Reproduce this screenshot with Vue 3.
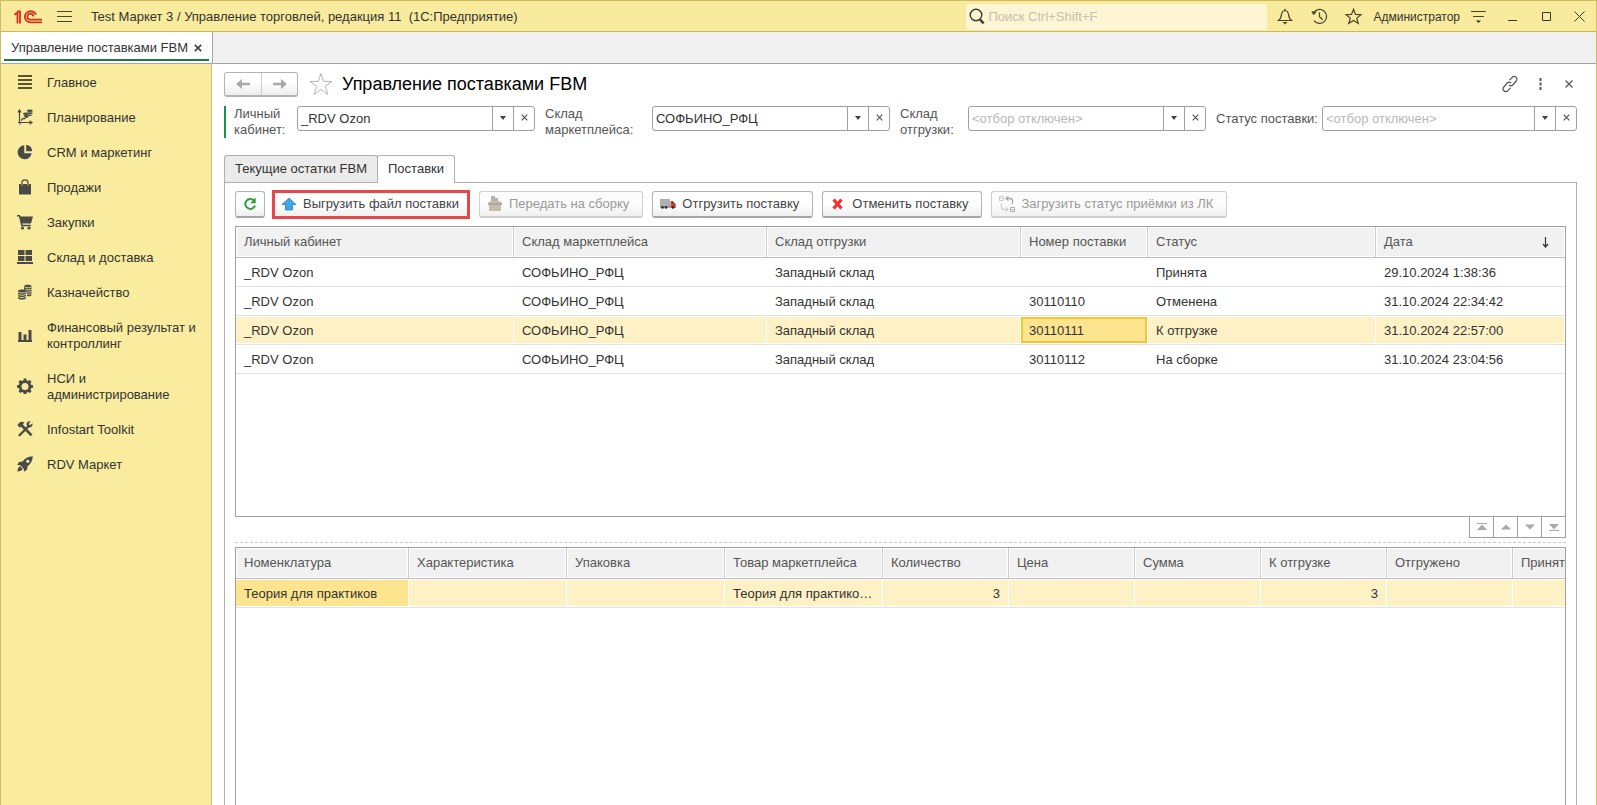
<script setup>
import { ref } from 'vue'

const sections = [
  { icon: 'lines', label: 'Главное' },
  { icon: 'plan', label: 'Планирование' },
  { icon: 'pie', label: 'CRM и маркетинг' },
  { icon: 'bag', label: 'Продажи' },
  { icon: 'cart', label: 'Закупки' },
  { icon: 'stock', label: 'Склад и доставка' },
  { icon: 'coins', label: 'Казначейство' },
  { icon: 'chart', label: 'Финансовый результат и контроллинг' },
  { icon: 'gear', label: 'НСИ и администрирование' },
  { icon: 'tools', label: 'Infostart Toolkit' },
  { icon: 'rocket', label: 'RDV Маркет' },
]

const filters = ref([
  { id: 'account', label: 'Личный кабинет:', value: '_RDV Ozon', marked: true },
  { id: 'market', label: 'Склад маркетплейса:', value: 'СОФЬИНО_РФЦ' },
  { id: 'shipping', label: 'Склад отгрузки:', value: '' },
  { id: 'status', label: 'Статус поставки:', value: '' },
])

const supplyColumns = ['Личный кабинет', 'Склад маркетплейса', 'Склад отгрузки', 'Номер поставки', 'Статус', 'Дата']
const supplies = [
  ['_RDV Ozon', 'СОФЬИНО_РФЦ', 'Западный склад', '', 'Принята', '29.10.2024 1:38:36'],
  ['_RDV Ozon', 'СОФЬИНО_РФЦ', 'Западный склад', '30110110', 'Отменена', '31.10.2024 22:34:42'],
  ['_RDV Ozon', 'СОФЬИНО_РФЦ', 'Западный склад', '30110111', 'К отгрузке', '31.10.2024 22:57:00'],
  ['_RDV Ozon', 'СОФЬИНО_РФЦ', 'Западный склад', '30110112', 'На сборке', '31.10.2024 23:04:56'],
]
const activeRow = 2
const activeCol = 3

const goodsColumns = ['Номенклатура', 'Характеристика', 'Упаковка', 'Товар маркетплейса', 'Количество', 'Цена', 'Сумма', 'К отгрузке', 'Отгружено', 'Принято']
const goods = ['Теория для практиков', '', '', 'Теория для практико…', '3', '', '', '3', '', '']
</script>

<template>
  <div class="window">
    <header class="titlebar">
      <svg class="logo" viewBox="0 0 30 14" aria-label="1С">
        <g fill="none" stroke="#d6301f" stroke-width="1.9">
          <path d="M.4 4.600 3.600 2.600V13.600M3 1.300h3.200V13.600" />
          <path d="M22.800 4.600A6 5.700 0 1 0 17 12.500H29" />
          <path d="M20 6.300A3.100 3.100 0 1 0 17 9.700H29" />
        </g>
      </svg>
      <button class="bare burger" aria-label="Меню"><svg width="15" height="13" viewBox="0 0 15 13"><path d="M0 1.500h15M0 6.500h15M0 11.500h15" stroke="#4b4532" fill="none" /></svg></button>
      <span class="app-name">Test Маркет 3 / Управление торговлей, редакция 11&nbsp; (1С:Предприятие)</span>
      <label class="search">
        <svg width="16" height="17" viewBox="0 0 16 17" fill="none" stroke="#3f3b2d"><circle cx="7" cy="7" r="5.800" stroke-width="1.400" /><path d="m11 11.500 3.600 3.800" stroke-width="2.400" /></svg>
        <input type="search" placeholder="Поиск Ctrl+Shift+F" aria-label="Поиск">
      </label>
      <button class="bare tool" aria-label="Уведомления"><svg width="16" height="17" viewBox="0 0 16 17" fill="none" stroke="#47422f" stroke-width="1.200"><path d="M1.500 12.500h13c-2.500-1.600-2.700-3.600-3-6C11.200 4 10 2.700 8 2.500 6 2.700 4.800 4 4.500 6.500c-.3 2.400-.5 4.400-3 6zM8 .8v1.700" /><path d="M5.500 14h5L8 16.500z" fill="#47422f" stroke="none" /></svg></button>
      <button class="bare tool" aria-label="История"><svg width="17" height="17" viewBox="0 0 17 17" fill="none" stroke="#47422f" stroke-width="1.200"><path d="M2.500 5A7 7 0 1 1 3 12.700M8.500 4.300v4.500l3.200 3" /><path d="M.3 3.200 5.800 3.700 2.500 7.300z" fill="#47422f" stroke="none" /></svg></button>
      <button class="bare tool" aria-label="Избранное"><svg width="17" height="17" viewBox="0 0 17 17" fill="none" stroke="#47422f" stroke-width="1.200"><path d="m8.500 1.300 2 5.100 5.500.3-4.300 3.400 1.500 5.300-4.700-3-4.700 3 1.500-5.300L1 6.700l5.500-.3z" /></svg></button>
      <a class="user" href="#">Администратор</a>
      <button class="bare panel" aria-label="Настройки"><svg width="15" height="14" viewBox="0 0 15 14"><path d="M0 1.500h15M2 6.500h11" stroke="#47422f" /><path d="M5 10.500h5L7.500 13z" fill="#332f22" /></svg></button>
      <button class="bare sys" aria-label="Свернуть"><svg width="11" height="11" viewBox="0 0 11 11"><path d="M1 9.500h9" stroke="#3a3628" /></svg></button>
      <button class="bare sys" aria-label="Развернуть"><svg width="11" height="11" viewBox="0 0 11 11"><path d="M1.500 1.500h8v8h-8z" stroke="#3a3628" fill="none" /></svg></button>
      <button class="bare sys" aria-label="Закрыть"><svg width="11" height="11" viewBox="0 0 11 11"><path d="m.5.5 10 10M10.500.5l-10 10" stroke="#3a3628" /></svg></button>
    </header>

    <nav class="doc-tabs">
      <div class="doc-tab">
        <a href="#">Управление поставками FBM</a>
        <button class="bare" aria-label="Закрыть вкладку"><svg width="8" height="8" viewBox="0 0 8 8"><path d="m.8.8 6.400 6.400M7.200.8.8 7.200" stroke="#444" stroke-width="1.700" /></svg></button>
      </div>
    </nav>

    <div class="body">
      <aside class="sidebar">
        <a v-for="s in sections" :key="s.label" href="#" class="section">
          <svg class="section-icon" width="16" height="16" viewBox="0 0 16 16" fill="#4b4a46">
            <path v-if="s.icon === 'lines'" d="M1 1h14v2H1zM1 5h14v2H1zM1 9h14v2H1zM1 13h14v2H1z" fill="#5b5230" />
            <template v-else-if="s.icon === 'plan'">
              <path d="M2.500 2v11.500H14M.8 3.500 2.500 1l1.700 2.500M12.500 11.800l2.500 1.700-2.500 1.700M1 13.500h2v2" fill="none" stroke="#4b4a46" stroke-width="1.200" />
              <path d="m4 11.500 2-2 1.500.3L9 8l2 .3" fill="none" stroke="#4b4a46" stroke-width="1.200" />
              <ellipse cx="12.800" cy="1.800" rx="3" ry="1.300" /><ellipse cx="12.800" cy="4.200" rx="3" ry="1" /><ellipse cx="8.800" cy="4.800" rx="2.800" ry="1.200" /><ellipse cx="9.300" cy="7" rx="2.800" ry="1" /><ellipse cx="12.500" cy="6.300" rx="2.500" ry=".8" />
            </template>
            <path v-else-if="s.icon === 'pie'" d="M7.300 1.300a7 7 0 1 0 7.300 7.900H7.300zM9.200.7v6.500h6A7 7 0 0 0 9.200.7z" />
            <template v-else-if="s.icon === 'bag'"><path d="M2 5h2.300v2h1.500V5h4.400v2h1.500V5H14v10.500H2z" /><path d="M5 7V3.500C5 1.500 6.200.8 8 .8s3 .7 3 2.700V7" fill="none" stroke="#4b4a46" stroke-width="1.200" /></template>
            <template v-else-if="s.icon === 'cart'"><path d="M0 1h3l.5 1.500H16L14 9.500H5.200l.3 1.300h8.300V12.300H4.200L2 2.500H0z" /><circle cx="5.500" cy="14" r="1.600" /><circle cx="12" cy="14" r="1.600" /></template>
            <path v-else-if="s.icon === 'stock'" d="M1 1h6.500v5H1zM8.500 1H15v5H8.500zM1 7h6.500v5H1zM8.500 7H15v5H8.500zM0 13h16v2H0z" />
            <template v-else-if="s.icon === 'coins'">
              <path d="M7 2.200c0-2 7.500-2 7.500 0v8.500c0 1.500-3 1.800-4.500 1.300V9.500L7 5.500z" /><path d="M1 7c0-2 8-2 8 0v7c0 2-8 2-8 0z" />
              <path d="M7.500 3c2 1 5 1 7 0M8.500 5.300c2 .7 4 .7 6 0M9.500 7.700c2 .5 3 .5 5 0M10 10c2 .3 3 .2 4.500-.3M1 8c2 1.300 6 1.300 8 0M1 10.300c2 1.300 6 1.300 8 0M1 12.600c2 1.300 6 1.300 8 0" fill="none" stroke="#f9ec9e" stroke-width=".8" />
            </template>
            <path v-else-if="s.icon === 'chart'" d="M1.500 5h3v8h-3zM6.500 7.500h3V13h-3zM11.500 3h3v10h-3zM1 13h14v2H1z" />
            <path v-else-if="s.icon === 'gear'" fill-rule="evenodd" d="M6.700.5h2.600l.4 1.900 1.300.6 1.700-1 1.800 1.800-1 1.700.5 1.300 2 .4v2.600l-2 .4-.5 1.300 1 1.700-1.800 1.800-1.700-1-1.300.5-.4 2H6.700l-.4-2-1.300-.5-1.700 1-1.800-1.800 1-1.700-.5-1.300-2-.4V7.200l2-.4.5-1.300-1-1.700 1.800-1.800 1.700 1 1.300-.6zM8 5a3.500 3.500 0 1 0 0 7 3.500 3.500 0 0 0 0-7z" />
            <template v-else-if="s.icon === 'tools'">
              <path d="m2.500 14.200 9-9" fill="none" stroke="#4b4a46" stroke-width="2.300" stroke-linecap="round" />
              <path d="M15.500 2.300 13 4.200l-1.300-1.300L13.500.4C10.500 0 9 2 9.700 4.300l2 2C14 7 16 5.300 15.500 2.300z" />
              <path d="M.3 4.300 2.500 1.500C4 .3 6 .5 7.500 1.700L5.700 3.200l9.800 10.300-1.800 1.800L4 5.700l-1.500.8-.7-.9z" />
            </template>
            <template v-else>
              <path d="M15.800.2C11 .4 7.800 2.500 5.500 5.500L2 6 .2 9l3 .3 3.500 3.500.3 3 3-2 .6-3.500C13.500 8 15.600 5 15.800.2zM3 10.200C1.300 11 .6 13 .4 15.600 3 15.400 5 14.700 5.800 13z" /><circle cx="10.800" cy="5.200" r="1.500" fill="#fffbe6" />
            </template>
          </svg>
          <span>{{ s.label }}</span>
        </a>
      </aside>

      <main class="content">
        <div class="heading">
          <div class="history">
            <button aria-label="Назад"><svg width="14" height="12" viewBox="0 0 14 12"><path d="M0 6 6 1v3.700h8v2.600H6V11z" fill="#a9a9a9" /></svg></button>
            <button aria-label="Вперед"><svg width="14" height="12" viewBox="0 0 14 12"><path d="M14 6 8 1v3.700H0v2.600h8V11z" fill="#a9a9a9" /></svg></button>
          </div>
          <button class="bare fav" aria-label="В избранное"><svg width="24" height="24" viewBox="0 0 24 24"><path d="m12 1.500 2.700 7.900H23l-6.700 4.900 2.600 8.200-6.900-5-6.900 5 2.600-8.200L1 9.400h8.300z" fill="none" stroke="#b5b5b5" /></svg></button>
          <h1>Управление поставками FBM</h1>
          <button class="bare act" aria-label="Ссылка"><svg width="18" height="18" viewBox="0 0 18 18" fill="none" stroke="#555" stroke-width="1.200"><path d="m8.500 5.200 2.700-2.900c2.500-2.400 6.300.9 4 3.700l-3.400 4C10.500 11.300 9 11 8 10" /><path d="m9.500 12.800-2.700 2.900c-2.500 2.400-6.300-.9-4-3.700l3.400-4C7.500 6.700 9 7 10 8" /></svg></button>
          <button class="bare act" aria-label="Ещё"><svg width="3" height="12" viewBox="0 0 3 12" fill="#555"><path d="M.5 0h2v3h-2zM.5 4.500h2v3h-2zM.5 9h2v3h-2z" /></svg></button>
          <button class="bare act" aria-label="Закрыть форму"><svg width="8" height="8" viewBox="0 0 8 8"><path d="m.5.5 7 7M7.500.5l-7 7" stroke="#555" stroke-width="1.200" /></svg></button>
        </div>

        <div class="filters">
          <div v-for="f in filters" :key="f.id" class="filter" :class="[f.id, { marked: f.marked }]">
            <label :for="f.id">{{ f.label }}</label>
            <div class="combo">
              <input :id="f.id" v-model="f.value" type="text" placeholder="<отбор отключен>">
              <button aria-label="Выбрать"><svg width="6" height="4" viewBox="0 0 6 4"><path d="M0 0h6L3 4z" fill="#444" /></svg></button>
              <button aria-label="Очистить"><svg width="7" height="7" viewBox="0 0 7 7"><path d="m.7.7 5.600 5.600M6.300.7.7 6.300" stroke="#555" stroke-width="1.200" /></svg></button>
            </div>
          </div>
        </div>

        <div class="form-tabs">
          <button class="form-tab">Текущие остатки FBM</button>
          <button class="form-tab current">Поставки</button>
        </div>

        <section class="pane">
          <div class="commands">
            <button class="cmd refresh" aria-label="Обновить"><svg width="14" height="14" viewBox="0 0 14 14"><path d="M11 3.500A5 5 0 1 0 12 8.700" fill="none" stroke="#2f9e3a" stroke-width="2" /><path d="M12.700.5v5.800H7.200z" fill="#2f9e3a" /></svg></button>
            <div class="highlight">
              <button class="cmd"><svg width="16" height="16" viewBox="0 0 16 16"><path d="m8 2 7 6.500h-3.500V14h-7V8.500H1z" fill="#41a5e6" stroke="#2a80bd" stroke-width=".8" /></svg>Выгрузить файл поставки</button>
            </div>
            <button class="cmd" disabled><svg width="16" height="16" viewBox="0 0 16 16"><path d="M4 0h4v2h3v4H4z" fill="#b5b5ad" /><path d="m1 7 2.500-2h9L15 7v2h-1v6H2V9H1z" fill="#c3bfac" /><path d="M1 7h14v2H1z" fill="#aca996" /></svg>Передать на сборку</button>
            <button class="cmd"><svg width="16" height="16" viewBox="0 0 16 16"><path d="M0 3h10v8H0z" fill="#b0b0b0" /><path d="M10.500 5h2.500l2.700 3.200V11.500h-5.200z" fill="#d93a2b" /><path d="M12 6h1l1.500 1.900H12z" fill="#77423c" /><path d="M0 10.500h16v1H0z" fill="#666" /><circle cx="2.500" cy="11.500" r="1.300" fill="#222" /><circle cx="6" cy="11.500" r="1.300" fill="#222" /><circle cx="13" cy="11.500" r="1.300" fill="#222" /></svg>Отгрузить поставку</button>
            <button class="cmd"><svg width="16" height="16" viewBox="0 0 16 16"><path d="m3.500 3.500 8 9M11.500 3.500l-8 9" stroke="#f5302f" stroke-width="3.200" /></svg>Отменить поставку</button>
            <button class="cmd" disabled><svg width="16" height="16" viewBox="0 0 16 16" fill="none" stroke="#a5a9ad"><path d="M.5.500h4v4h-4zM1.500 2.500h2" stroke="#c8cacc" /><path d="M11.500 11.500h4v4h-4zM12.500 13.500h2" /><path d="M7 2.500h4c1.500 0 2.500 1 2.500 2.500v3M9.500.5l-2.500 2 2.500 2" stroke-width="1.300" /><path d="M2.500 7v4c0 1.500 1 2.500 2.500 2.500h4M7 11.500l2 2-2 2" stroke="#cfd1d3" stroke-width="1.300" /></svg>Загрузить статус приёмки из ЛК</button>
          </div>

          <div class="grid-box supplies">
            <table>
              <colgroup><col v-for="(c, i) in supplyColumns" :key="c" :class="'s' + i"></colgroup>
              <thead>
                <tr><th v-for="(c, i) in supplyColumns" :key="c"><div :class="{ sorted: i === 5 }">{{ c }}<svg v-if="i === 5" width="7" height="11" viewBox="0 0 7 11"><path d="M3.500 0v10M1 7l2.500 3L6 7" fill="none" stroke="#333" stroke-width="1.200" /></svg></div></th></tr>
              </thead>
              <tbody>
                <tr v-for="(row, r) in supplies" :key="r" :class="{ selected: r === activeRow }">
                  <td v-for="(v, c) in row" :key="c"><div :class="{ focused: r === activeRow && c === activeCol }">{{ v }}</div></td>
                </tr>
              </tbody>
            </table>
          </div>

          <div class="pager">
            <button aria-label="В начало"><svg width="12" height="8" viewBox="0 0 12 8"><path d="M1 0h10v1H1zM6 1.500 11 7H1z" fill="#a9a9a9" /></svg></button>
            <button aria-label="Вверх"><svg width="12" height="8" viewBox="0 0 12 8"><path d="m6 1.500 5 5H1z" fill="#a9a9a9" /></svg></button>
            <button aria-label="Вниз"><svg width="12" height="8" viewBox="0 0 12 8"><path d="m6 6.500 5-5H1z" fill="#a9a9a9" /></svg></button>
            <button aria-label="В конец"><svg width="12" height="8" viewBox="0 0 12 8"><path d="M1 7h10v1H1zM6 6.500 11 1H1z" fill="#a9a9a9" /></svg></button>
          </div>
          <div class="splitter"></div>

          <div class="grid-box goods">
            <table>
              <colgroup><col v-for="(c, i) in goodsColumns" :key="c" :class="'g' + i"></colgroup>
              <thead><tr><th v-for="c in goodsColumns" :key="c"><div>{{ c }}</div></th></tr></thead>
              <tbody>
                <tr class="selected"><td v-for="(v, c) in goods" :key="c" :class="{ num: c > 3 }"><div :class="{ current: c === 0 }">{{ v }}</div></td></tr>
              </tbody>
            </table>
          </div>
        </section>
      </main>
    </div>
  </div>
</template>

<style>
body { margin: 0; }
</style>

<style scoped>
.window {
  display: flex;
  flex-direction: column;
  height: 100vh;
  min-height: 640px;
  box-sizing: border-box;
  overflow: hidden;
  border: 1px solid #cdbd60;
  border-bottom: 0;
  background: #fff;
  color: #333;
  font: 13px/16px "Liberation Sans", Arial, sans-serif;
}
.window *, .window *::before { box-sizing: border-box; }
button, input { font: inherit; color: inherit; margin: 0; }
button { display: flex; align-items: center; justify-content: center; padding: 0; }
a { color: inherit; text-decoration: none; }
svg { flex: none; display: block; }
.bare { border: 0; background: none; }

.titlebar {
  display: flex;
  align-items: center;
  flex: none;
  height: 31px;
  padding: 1px 1px 0 13px;
  background: #f9eb9d;
  border-bottom: 1px solid #c9b964;
}
.logo { width: 29px; height: 14px; }
.burger { margin-left: 14px; }
.app-name { margin-left: 19px; white-space: nowrap; }
.search {
  display: flex;
  align-items: center;
  width: 301px;
  height: 26px;
  margin-left: auto;
  padding-left: 3px;
  background: #fdf5d3;
  border-radius: 3px;
}
.search input { flex: 1; min-width: 0; padding: 0 3px; border: 0; background: none; outline: 0; }
.search input::placeholder { color: #c6c1ac; opacity: 1; }
.tool { width: 34px; }
.search + .tool { margin-left: 1px; }
.user { margin-left: 3px; font-size: 12px; }
.panel { width: 24px; margin-left: 6px; margin-right: 5px; }
.sys { width: 34px; }
.sys:last-child { width: 32px; }

.doc-tabs { display: flex; flex: none; height: 32px; background: #f1f1f1; border-bottom: 1px solid #a5a5a5; }
.doc-tab { position: relative; display: flex; align-items: center; gap: 6px; padding: 0 10px; background: #fff; border-right: 1px solid #a5a5a5; }
.doc-tab::before { content: ""; position: absolute; left: 3px; right: 3px; bottom: 2px; height: 2px; background: #23764a; }

.body { display: flex; flex: 1; min-height: 0; }
.sidebar { flex: none; width: 211px; background: #f9ec9e; border-right: 1px solid #cfc27a; }
.section { display: flex; align-items: center; gap: 14px; padding: 9px 12px 8px 16px; }
.section span { padding-top: 2px; }

.content { display: flex; flex: 1; flex-direction: column; min-width: 0; padding: 8px 19px 0 12px; }
.heading { display: flex; align-items: center; height: 24px; }
.history { display: flex; height: 25px; border: 1px solid #b3b3b3; border-bottom: 2px solid #b3b3b3; border-radius: 3px; background: linear-gradient(#fff 40%, #ededed); }
.history button { width: 36px; border: 0; background: none; }
.history button + button { border-left: 1px solid #cfcfcf; }
.fav { margin: 0 9px 0 11px; }
h1 { margin: 0 auto 0 0; color: #000; font-size: 18px; line-height: 24px; font-weight: 400; }
.act { width: 30px; }
.act:last-child { width: 16px; margin-left: 6px; }

.filters { display: flex; gap: 10px; margin-top: 10px; height: 32px; }
.filter { display: flex; min-width: 0; color: #555; }
.filter label { flex: none; }
.account { flex: 1 1 311px; }
.market { flex: 1 1 345px; }
.shipping { flex: 1 1 306px; }
.status { flex: 1 1 361px; }
.marked { border-left: 2px solid #12964b; padding-left: 8px; }
.account label { width: 63px; }
.market label { width: 107px; }
.shipping label { width: 68px; }
.status label { width: 106px; padding-top: 5px; white-space: nowrap; }
.combo { display: flex; flex: 1; min-width: 0; height: 25px; border: 1px solid #a0a0a0; border-radius: 3px; background: #fff; }
.combo input { flex: 1; min-width: 0; padding: 0 3px; border: 0; background: none; outline: 0; color: #333; }
.combo input::placeholder { color: #b8b8b8; opacity: 1; }
.combo button { width: 21px; padding-bottom: 2px; border: 0; border-left: 1px solid #a0a0a0; background: none; }

.form-tabs { position: relative; display: flex; flex: none; height: 28px; margin-top: 17px; }
.form-tab { height: 27px; padding: 0 10px; border: 1px solid #b0b0b0; border-bottom: 0; border-radius: 3px 3px 0 0; background: #ebebeb; }
.form-tab.current { height: 28px; margin-left: -1px; padding-bottom: 1px; background: #fff; }
.pane { display: flex; flex: 1; flex-direction: column; min-height: 0; margin-top: -1px; padding: 8px 10px 0; border: 1px solid #b0b0b0; border-bottom: 0; }

.commands { display: flex; align-items: center; flex: none; height: 26px; gap: 9px; }
.cmd { gap: 6px; height: 27px; padding: 0 13px 0 7px; border: 1px solid #b3b3b3; border-bottom: 2px solid #a5a5a5; border-radius: 3px; background: linear-gradient(#fff 50%, #efefef); color: #444; white-space: nowrap; }
.cmd:disabled { color: #999; border-color: #cfcfcf; background: linear-gradient(#fcfcfc 50%, #f0f0f0); }
.refresh { width: 30px; padding: 0; }
.highlight { margin-left: -2px; border: 3px solid #e8474a; }
.highlight .cmd { height: 23px; padding: 0 8px 0 6px; border: 0; border-radius: 0; }

.grid-box { min-height: 0; overflow: hidden; border: 1px solid #a0a0a0; }
.supplies { flex: 291 1 0; margin-top: 9px; }
.goods { flex: 258 1 0; border-bottom: 0; }
table { width: 100%; table-layout: fixed; border-collapse: separate; border-spacing: 0; }
th, td { padding: 0; text-align: left; font-weight: 400; }
th { padding: 1px 0 1px 1px; border-right: 1px solid #cbcbcb; border-bottom: 1px solid #bdbdbd; color: #555; }
th div { display: flex; align-items: center; justify-content: space-between; height: 28px; padding: 0 7px; margin-right: 1px; background: #f1f1f1; white-space: nowrap; }
th:last-child { border-right: 0; }
.sorted { padding-right: 15px; }
td { padding: 1px 1px 1px 0; border-bottom: 1px solid #e2e2e2; }
td div { height: 26px; padding: 0 8px; line-height: 27px; overflow: hidden; white-space: nowrap; text-overflow: ellipsis; }
.selected div { background: #fdf1c5; }
.selected .focused { padding: 0 6px; line-height: 23px; border: 2px solid #f6c52f; background: #fde48e; }
.selected .current { background: #fde48e; }
.num { text-align: right; }
.s0 { width: 278px; }
.s1 { width: 253px; }
.s2 { width: 254px; }
.s3 { width: 127px; }
.s4 { width: 228px; }
.goods table { width: 1403px; }
.g0 { width: 173px; }
.g1, .g2, .g3 { width: 158px; }

.pager { display: flex; flex: none; align-self: flex-end; height: 21px; border: solid #a0a0a0; border-width: 0 1px 1px 0; }
.pager button { width: 24px; border: 0; border-left: 1px solid #a0a0a0; background: none; }
.splitter { flex: none; height: 1px; margin: 4px 0; border-top: 1px dashed #c8c8c8; }
</style>
